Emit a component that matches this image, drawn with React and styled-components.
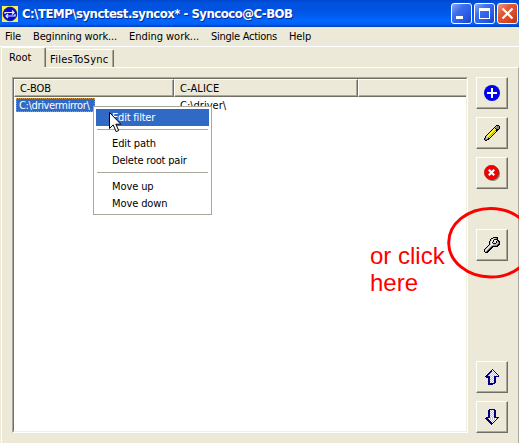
import React from "react";
import styled, { createGlobalStyle } from "styled-components";

const Global = createGlobalStyle`
  html, body { margin: 0; padding: 0; overflow: hidden; }
  * { box-sizing: border-box; }
`;

const Window = styled.div`
  position: relative;
  width: 519px;
  height: 443px;
  overflow: hidden;
  display: flex;
  flex-direction: column;
  background: #ece9d8;
  color: #000;
  font: 11px/14px "DejaVu Sans Condensed", "Noto Sans", sans-serif;
  white-space: nowrap;
`;

const TitleBar = styled.header`
  height: 27px;
  flex: none;
  display: flex;
  align-items: center;
  padding: 0 1px 0 2px;
  background: linear-gradient(#0045cc 0, #0052df 3px, #0053e1 9px, #0058ea 14px, #0066ff 20px, #0062f6 24px, #0046cf 26px, #0040bd 27px);
`;

const Title = styled.h1`
  flex: 1;
  margin: 0 0 0 4px;
  color: #fff;
  font: bold 13px/18px "DejaVu Sans Condensed", sans-serif;
  letter-spacing: -0.5px;
  text-shadow: 1px 1px 0 #062a8c;
`;

const Controls = styled.div`
  display: flex;
  gap: 2px;
`;

const ControlButton = styled.button`
  width: 21px;
  height: 21px;
  padding: 0;
  border: 1px solid #fff;
  border-radius: 3px;
  background: ${(p) =>
    p.$close
      ? "linear-gradient(135deg, #ee9b83, #e15a35 35%, #d64821 70%, #b8310c)"
      : "linear-gradient(135deg, #88a9f5, #3d6fec 35%, #2358e4 75%, #1742bd)"};
  svg { display: block; }
`;

const MenuBar = styled.nav`
  height: 20px;
  flex: none;
  display: flex;
  border-bottom: 1px solid #fff;
`;

const Label = styled.span`
  letter-spacing: ${(p) => p.$track || 0}px;
`;

const MenuTitle = styled.span`
  flex: none;
  width: ${(p) => p.$width}px;
  padding-top: 3px;
  &:first-child { margin-left: 5px; }
`;

const TabStrip = styled.div`
  height: 20px;
  flex: none;
  display: flex;
  align-items: flex-end;
  margin-left: 1px;
`;

const Tab = styled.div`
  width: ${(p) => (p.$active ? 45 : 68)}px;
  height: ${(p) => (p.$active ? 20 : 18)}px;
  padding: ${(p) => (p.$active ? "3px 0 0 7px" : "3px 0 0 4px")};
  border-top: 1px solid #fff;
  border-left: ${(p) => (p.$active ? "1px solid #fff" : 0)};
  border-right: 1px solid #716f64;
  box-shadow: inset -1px 0 #aca899;
  border-radius: 2px 2px 0 0;
`;

const Page = styled.main`
  flex: 1;
  display: flex;
  margin-left: 1px;
  padding: 9px 10px 10px 10px;
  border-left: 1px solid #fff;
  border-right: 1px solid #aca899;
  position: relative;
  border-top: 1px solid #fff;
`;

const TabGap = styled.div`
  position: absolute;
  left: 0;
  top: -1px;
  width: 43px;
  height: 1px;
  background: #ece9d8;
`;

const ListView = styled.section`
  width: 456px;
  height: 356px;
  flex: none;
  background: #fff;
  border: 1px solid;
  border-color: #aca899 #fff #fff #aca899;
`;

const ListInner = styled.div`
  height: 100%;
  border: 1px solid;
  border-color: #716f64 #f1efe2 #f1efe2 #716f64;
`;

const HeaderRow = styled.div`
  display: grid;
  grid-template-columns: 160px 184px 108px;
  height: 17px;
`;

const HeaderCell = styled.div`
  background: #ece9d8;
  padding: 1px 0 0 5px;
  line-height: 15px;
  border: 1px solid;
  border-color: #fff #716f64 #716f64 #fff;
  box-shadow: inset -1px -1px #aca899;
  &:last-child { border-right: 0; box-shadow: inset 0 -1px #aca899; }
`;

const DataRow = styled.div`
  display: grid;
  grid-template-columns: 164px 180px;
  padding: 2px 0 0 2px;
`;

const Cell = styled.div`
  height: 14px;
  line-height: 15px;
`;

const Selected = styled(Cell)`
  width: 79px;
  padding-left: 2px;
  color: #fff;
  background: #316ac5;
  border: 1px dotted #ce953a;
  line-height: 13px;
`;

const Toolbar = styled.aside`
  display: flex;
  flex-direction: column;
  gap: 8px;
  margin-left: 8px;
`;

const ToolButton = styled.button`
  width: 32px;
  height: 32px;
  flex: none;
  margin: ${(p) => p.$before || 0}px 0 0;
  padding: 0;
  display: grid;
  place-items: center;
  background: #ece9d8;
  border: 1px solid;
  border-color: #fff #716f64 #716f64 #fff;
  box-shadow: inset -1px -1px #aca899;
`;

const ContextMenu = styled.div`
  position: absolute;
  left: 93px;
  top: 106px;
  width: 119px;
  height: 109px;
  padding: 2px;
  background: #fff;
  border: 1px solid #aca899;
`;

const ContextItem = styled.div`
  height: 17px;
  padding-left: 16px;
  line-height: 17px;
  letter-spacing: ${(p) => p.$track || 0}px;
  color: ${(p) => (p.$hot ? "#fff" : "#000")};
  background: ${(p) => (p.$hot ? "#316ac5" : "transparent")};
`;

const Divider = styled.hr`
  height: 1px;
  margin: 3px 1px 5px;
  border: 0;
  background: #aca899;
`;

const Cursor = styled.svg`
  position: absolute;
  left: 109px;
  top: 112px;
`;

const Annotation = styled.div`
  position: absolute;
  left: 370px;
  top: 242px;
  color: #f00;
  font: 24px/27px "Liberation Sans", Arial, sans-serif;
`;

const Ring = styled.svg`
  position: absolute;
  left: 445px;
  top: 204px;
`;

const palette = {
  N: "#000080", W: "#ffffff", G: "#c0c0c0", K: "#000000",
  Y: "#f8f020", O: "#a8a000", D: "#808080", L: "#f4ec90",
};

function PixelIcon({ rows }) {
  const width = rows[0].length;
  return (
    <svg width={width} height={rows.length} shapeRendering="crispEdges">
      {rows.flatMap((row, y) =>
        [...row].map((c, x) =>
          palette[c] ? <rect key={`${x}-${y}`} x={x} y={y} width="1" height="1" fill={palette[c]} /> : null
        )
      )}
    </svg>
  );
}

const upArrow = [
  ".......N......",
  "......NWN.....",
  ".....NNGWN....",
  "....NNGWGWN...",
  "...NNGWGWGWN..",
  "..NNGWGWGWGWN.",
  ".NNGWGWGWGWGWN",
  "NNNNNWGWGNNNNN",
  ".NNNNGWGWNN...",
  "...NNWGWGNN...",
  "...NNGWGWNN...",
  "...NNWGWGNN...",
  "...NNGWGWNN...",
  "...NNWGWGNN...",
  "...NNNNNNN....",
  "...NNNNN......",
];

const downArrow = [
  "....NNNNNN....",
  "...NNWGWGNN...",
  "...NNGWGWNN...",
  "...NNWGWGNN...",
  "...NNGWGWNN...",
  "...NNWGWGNN...",
  "...NNGWGWNN...",
  "...NNWGWGNN...",
  ".NNNNGWGWNNNNN",
  "NNNGWGWGWGWGN.",
  ".NNNWGWGWGWN..",
  "..NNNWGWGWN...",
  "...NNNWGWN....",
  "....NNNWN.....",
  ".....NNN......",
  "......N.......",
];

const pencil = [
  "............KKK.",
  "...........KGDDK",
  "..........KGDDDK",
  ".........KLKDDDK",
  "........KYLYKKK.",
  ".......KYLYOKK..",
  "......KYLYOYK...",
  ".....KYLYOYK....",
  "....KYLYOYK.....",
  "...KYLYOYK......",
  "..KYLYOYK.......",
  ".KGLYOYK........",
  ".KGGOYK.........",
  "KDGGKK..........",
  "KDDKK...........",
  ".KK.............",
];

const wrench = [
  ".........KKKKK..",
  ".......KKGGGDK..",
  "......KGWGKKKK..",
  "......KGWK...KK.",
  ".....KGWGK..KGKK",
  ".....KGWK...KGDK",
  ".....KGWGKKKGGDK",
  ".....KGWWGGGGDKK",
  "....KGWGGDDDDKK.",
  "...KGWGDKKKKKK..",
  "..KGWGDKK.......",
  ".KGWGDKK........",
  "KGWGDKK.........",
  "KWGDKK..........",
  "KGDKK...........",
  ".KKK............",
];

const AddIcon = () => (
  <svg width="16" height="16">
    <circle cx="8" cy="8" r="8" fill="#0000f5" />
    <path d="M8 3v10M3 8h10" stroke="#fff" strokeWidth="2" shapeRendering="crispEdges" />
  </svg>
);

const DeleteIcon = () => (
  <svg width="16" height="16">
    <circle cx="8.8" cy="8.8" r="7.2" fill="#858278" />
    <circle cx="7.5" cy="7.5" r="7.2" fill="#f80000" stroke="#b00000" strokeWidth=".6" />
    <path d="M4.8 4.8l5.4 5.4M10.2 4.8l-5.4 5.4" stroke="#fff" strokeWidth="2.2" />
  </svg>
);

const AppIcon = () => (
  <svg width="16" height="16">
    <path fill="#f6ee55" d="M0 0h16v16H0z" />
    <circle cx="8" cy="8" r="6.8" fill="#0808dc" stroke="#141e78" />
    <path d="M3 8V6.5h9M10 4.5l2 2-2 2M13 8v2H4M6 7.8L4 10l2 2" fill="none" stroke="#e9edff" strokeWidth="1.2" />
  </svg>
);

const menus = [
  ["File", 28, -0.1],
  ["Beginning work...", 96, -0.13],
  ["Ending work...", 82, -0.03],
  ["Single Actions", 78, -0.27],
  ["Help", 30, -0.1],
];

export default function App() {
  return (
    <Window>
      <Global />
      <TitleBar>
        <AppIcon />
        <Title>C:\TEMP\synctest.syncox* - Syncoco@C-BOB</Title>
        <Controls>
          <ControlButton aria-label="Minimize">
            <svg width="19" height="19"><path d="M4 12h7v3H4z" fill="#fff" /></svg>
          </ControlButton>
          <ControlButton aria-label="Maximize">
            <svg width="19" height="19"><path d="M4 4h11v11H4zM5 7v7h9V7z" fill="#fff" fillRule="evenodd" /></svg>
          </ControlButton>
          <ControlButton $close aria-label="Close">
            <svg width="19" height="19"><path d="M4.5 4.5l10 10M14.5 4.5l-10 10" stroke="#fff" strokeWidth="2.2" /></svg>
          </ControlButton>
        </Controls>
      </TitleBar>
      <MenuBar>
        {menus.map(([text, width, track]) => (
          <MenuTitle key={text} $width={width}><Label $track={track}>{text}</Label></MenuTitle>
        ))}
      </MenuBar>
      <TabStrip>
        <Tab $active><Label>Root</Label></Tab>
        <Tab><Label $track={0.25}>FilesToSync</Label></Tab>
      </TabStrip>
      <Page>
        <TabGap />
        <ListView>
          <ListInner>
            <HeaderRow>
              <HeaderCell><Label $track={-0.05}>C-BOB</Label></HeaderCell>
              <HeaderCell><Label $track={0.1}>C-ALICE</Label></HeaderCell>
              <HeaderCell />
            </HeaderRow>
            <DataRow>
              <Selected><Label $track={-0.35}>C:\drivermirror\</Label></Selected>
              <Cell><Label>C:\driver\</Label></Cell>
            </DataRow>
          </ListInner>
        </ListView>
        <Toolbar>
          <ToolButton aria-label="Add"><AddIcon /></ToolButton>
          <ToolButton aria-label="Edit"><PixelIcon rows={pencil} /></ToolButton>
          <ToolButton aria-label="Delete"><DeleteIcon /></ToolButton>
          <ToolButton aria-label="Filter" $before={32}><PixelIcon rows={wrench} /></ToolButton>
          <ToolButton aria-label="Up" $before={92}><PixelIcon rows={upArrow} /></ToolButton>
          <ToolButton aria-label="Down"><PixelIcon rows={downArrow} /></ToolButton>
        </Toolbar>
      </Page>
      <ContextMenu>
        <ContextItem $hot $track={-0.2}>Edit filter</ContextItem>
        <Divider />
        <ContextItem $track={-0.1}>Edit path</ContextItem>
        <ContextItem $track={-0.2}>Delete root pair</ContextItem>
        <Divider />
        <ContextItem $track={-0.1}>Move up</ContextItem>
        <ContextItem $track={-0.1}>Move down</ContextItem>
      </ContextMenu>
      <Cursor width="13" height="22">
        <path d="M.5.5v16l3.7-3.6 2.9 6.7 2.6-1.1-2.9-6.3h5z" fill="#fff" stroke="#000" />
      </Cursor>
      <Annotation>or click<br />here</Annotation>
      <Ring width="90" height="78">
        <ellipse cx="45.7" cy="38.7" rx="42" ry="34.3" fill="none" stroke="#f00" strokeWidth="3" />
      </Ring>
    </Window>
  );
}
